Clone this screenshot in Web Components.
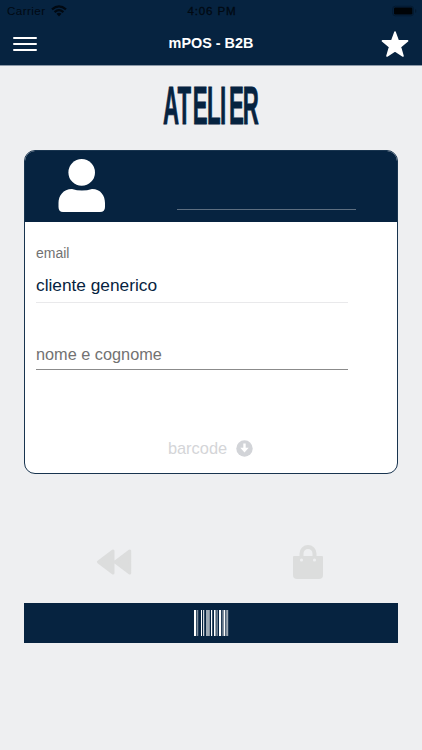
<!DOCTYPE html>
<html lang="it">
<head>
<meta charset="utf-8">
<title>mPOS - B2B</title>
<style>
html, body { margin: 0; height: 100%; }
body { --navy: #062340; --page: #eeeff1; background: var(--page); font-family: "Liberation Sans", Arial, sans-serif; color: var(--navy); overflow: hidden; }
</style>
</head>
<body>
<mpos-app></mpos-app>
<script>
const define = (name, html) => {
  const template = document.createElement('template');
  template.innerHTML = html;
  customElements.define(name, class extends HTMLElement {
    constructor() {
      super();
      this.attachShadow({ mode: 'open' }).append(template.content.cloneNode(true));
    }
  });
};

define('status-bar', `
<style>
:host { display: grid; grid-template-columns: 1fr auto 1fr; align-items: center; height: 22px; padding: 0 5px 0 7px; box-sizing: border-box; color: #010912; font-size: 11.6px; line-height: 22px; }
.left { display: flex; align-items: center; gap: 5px; letter-spacing: .45px; }
.time { font-weight: 400; -webkit-text-stroke: .3px; letter-spacing: .85px; }
.battery { justify-self: end; }
svg { display: block; }
</style>
<div class="left"><span>Carrier</span>
<svg width="16" height="12" viewBox="0 0 16 12" fill="none" stroke="currentColor" stroke-width="2.2"><path d="M1 4.4Q8-1.8 15 4.4M3.6 7.1Q8 3.3 12.4 7.1"/><path d="M5.5 8.7Q8 6.8 10.5 8.7L8 11.4Z" fill="currentColor" stroke="none"/></svg></div>
<span class="time">4:06 PM</span>
<svg class="battery" width="25" height="12" viewBox="0 0 25 12"><rect x=".7" y="1.2" width="20.8" height="9.6" rx="2.6" fill="none" stroke="#041a30"/><rect x="2" y="2.5" width="18.4" height="7" rx="1.3" fill="#000306"/><path d="M23 4.2q1.4.3 1.4 1.8T23 7.8z" fill="#041a30"/></svg>`);

define('nav-bar', `
<style>
:host { display: grid; grid-template-columns: 1fr auto 1fr; align-items: center; height: 43px; padding: 0 13px; color: #fff; }
h1 { margin: 0 0 2px; font-size: 14.4px; line-height: 20px; font-weight: 700; }
svg { display: block; }
.star { justify-self: end; }
</style>
<svg width="24" height="16" viewBox="0 0 24 16" stroke="#fff" stroke-width="2" stroke-linecap="round"><path d="M1 2h22M1 8h22M1 14h22"/></svg>
<h1>mPOS - B2B</h1>
<svg class="star" width="28" height="28" viewBox="0 0 28 28" fill="#fff" stroke="#fff" stroke-width="1.6" stroke-linejoin="round"><path d="M14 2.1l3.2 8.7 9.4.1-7.2 6 2.6 9.1L14 20.8 6 26l2.6-9.1-7.2-6 9.4-.1z"/></svg>`);

define('brand-logo', `
<style>:host { display: block; height: 72px; } svg { display: block; margin: auto; }</style>
<svg width="100" height="72" viewBox="0 0 100 72" fill="#062340" stroke="#062340" stroke-width=".8"><text transform="translate(0 58) scale(.42 1)" x="4.5 39.3 75.7 109.5 140.5 162 194.5" y="0" font-family="Liberation Sans" font-size="53" font-weight="700">ATELIER</text></svg>`);

define('customer-card', `
<style>
:host { display: flex; flex-direction: column; height: 324px; box-sizing: border-box; border: 1px solid #18344f; border-radius: 11px; background: #fff; overflow: hidden; }
header { display: flex; height: 71px; background: var(--navy); box-sizing: border-box; padding: 8px 41px 0 33px; justify-content: space-between; }
header i { height: 50px; width: 179px; border-bottom: 1px solid #5d6e80; }
svg { display: block; }
.body { padding: 0 11px; display: flex; flex-direction: column; flex: 1; }
</style>
<header><svg width="48" height="54" viewBox="0 0 48 54" fill="#fff"><circle cx="23.7" cy="13.4" r="13.3"/><path d="M14 30Q19 31.5 24 31.5T34 30C43 30 47 37 47 44V48Q47 53 42 53H5Q.5 53 .5 48V44C.5 37 5 30 14 30Z"/></svg><i></i></header>
<div class="body"><slot></slot></div>`);

define('text-field', `
<style>
:host { display: block; width: 312px; border-bottom: 1px solid var(--line, #8b8b8b); color: var(--ink, #727272); font-size: var(--size, 16.3px); line-height: 20px; }
::slotted([slot="label"]) { display: block; color: #727272; font-size: 14px; line-height: 18px; margin-bottom: 13px; }
</style><slot name="label"></slot><slot></slot>`);

define('barcode-link', `
<style>:host { display: flex; justify-content: center; align-items: center; gap: 9px; color: #d4d5d8; font-size: 16.4px; line-height: 20px; } svg { display: block; margin-top: 1px; }</style>
<slot></slot><svg width="17" height="17" viewBox="0 0 17 17"><circle cx="8.5" cy="8.5" r="8.2" fill="#d2d4d8"/><path d="M7.3 3.5h2.4v4.3h3L8.5 12.6 4.3 7.8h3z" fill="#fff"/></svg>`);

define('action-row', `
<style>:host { display: flex; justify-content: space-between; padding: 0 98px 0 96px; height: 36px; align-items: center; } svg { display: block; }</style>
<svg width="36" height="28" viewBox="0 0 36 28" fill="#dcdddd" stroke="#dcdddd" stroke-width="3" stroke-linejoin="round"><path d="M17 3v22L2.5 14zM33.7 3v22L19.2 14z"/></svg>
<svg width="32" height="36" viewBox="0 0 32 36"><path d="M9.5 16V9.5a6.5 6.5 0 0 1 13 0V16" fill="none" stroke="#dcdddd" stroke-width="4"/><path d="M2 12h28a1 1 0 0 1 1 1V31q0 4-4 4H5q-4 0-4-4V13a1 1 0 0 1 1-1z" fill="#dcdddd"/><circle cx="9.5" cy="16" r="1.6" fill="#eeeff1"/><circle cx="22.5" cy="16" r="1.6" fill="#eeeff1"/></svg>`);

define('scan-button', `
<style>:host { display: flex; justify-content: center; align-items: center; height: 39.5px; background: var(--navy); } svg { display: block; }</style>
<svg width="36" height="26" viewBox="0 0 36 26" fill="#fff"><path d="M1 0h2.2v26H1zM8 0h1v26H8zM10.2 0h1v26h-1zM18 0h1.2v26H18zM21 0h1.6v26H21zM26 0h2v26h-2zM30.5 0h1.8v26h-1.8z"/><path d="M4.2 0h1v26h-1zM13 0h3.8v26H13zM23.5 0h1.2v26h-1.2zM28.8 0h.8v26h-.8zM33.2 0h2v26h-2z" opacity=".6"/></svg>`);

define('mpos-app', `
<style>
:host { display: flex; flex-direction: column; height: 750px; width: 422px; }
.top { background: var(--navy); height: 65px; border-bottom: 1px solid #8c99a8; flex: none; }
main { display: flex; flex-direction: column; padding: 0 24px; }
customer-card { margin-top: 12px; }
.email { --line: #e9e9eb; --ink: #062340; --size: 17.3px; margin-top: 22px; padding-bottom: 7px; }
.name { margin-top: 41px; padding-bottom: 5px; }
barcode-link { margin: 68px 1px 0 0; }
action-row { margin: 70px -24px 0; }
scan-button { margin-top: 23px; }
</style>
<div class="top"><status-bar></status-bar><nav-bar></nav-bar></div>
<main>
<brand-logo></brand-logo>
<customer-card>
<text-field class="email"><span slot="label">email</span>cliente generico</text-field>
<text-field class="name">nome e cognome</text-field>
<barcode-link>barcode</barcode-link>
</customer-card>
<action-row></action-row>
<scan-button></scan-button>
</main>`);
</script>
</body>
</html>
